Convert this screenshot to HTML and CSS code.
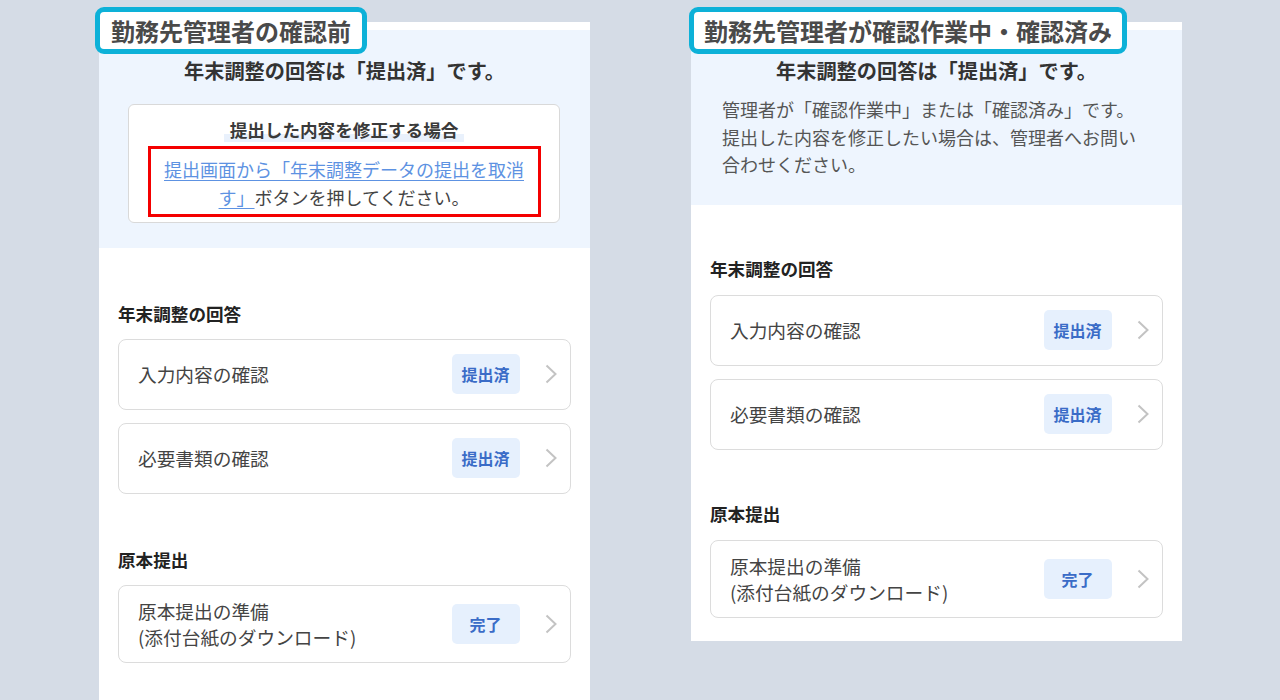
FILE: index.html
```html
<!DOCTYPE html>
<html lang="ja">
<head>
<meta charset="utf-8">
<title>年末調整の回答</title>
<link rel="stylesheet" href="styles.css">
</head>
<body>
<div class="stage">
  <section class="panel panel--left">
    <div class="label label--left">勤務先管理者の確認前</div>
    <div class="summary summary--left">
      <h1 class="summary-title">年末調整の回答は「提出済」です。</h1>
      <div class="notice">
        <div class="notice-title"><span class="hl">提出した内容を修正する場合</span></div>
        <div class="redbox"><a class="link" href="#">提出画面から「年末調整データの提出を取消す」</a>ボタンを押してください。</div>
      </div>
    </div>
    <div class="content content--left">
      <h2 class="sec-title">年末調整の回答</h2>
      <div class="cards">
        <div class="card"><div class="card-text">入力内容の確認</div><span class="badge">提出済</span><svg class="chev" width="14" height="20" viewBox="0 0 14 20"><path d="M2.5 1.5 L11.5 10 L2.5 18.5" fill="none" stroke="#c3c3c3" stroke-width="2"/></svg></div>
        <div class="card"><div class="card-text">必要書類の確認</div><span class="badge">提出済</span><svg class="chev" width="14" height="20" viewBox="0 0 14 20"><path d="M2.5 1.5 L11.5 10 L2.5 18.5" fill="none" stroke="#c3c3c3" stroke-width="2"/></svg></div>
      </div>
      <h2 class="sec-title">原本提出</h2>
      <div class="cards">
        <div class="card"><div class="card-text">原本提出の準備<br>(添付台紙のダウンロード)</div><span class="badge">完了</span><svg class="chev" width="14" height="20" viewBox="0 0 14 20"><path d="M2.5 1.5 L11.5 10 L2.5 18.5" fill="none" stroke="#c3c3c3" stroke-width="2"/></svg></div>
      </div>
    </div>
  </section>

  <section class="panel panel--right">
    <div class="label label--right">勤務先管理者が確認作業中・確認済み</div>
    <div class="summary summary--right">
      <h1 class="summary-title">年末調整の回答は「提出済」です。</h1>
      <p class="summary-text">管理者が「確認作業中」または「確認済み」です。<br>提出した内容を修正したい場合は、管理者へお問い<br>合わせください。</p>
    </div>
    <div class="content">
      <h2 class="sec-title">年末調整の回答</h2>
      <div class="cards">
        <div class="card"><div class="card-text">入力内容の確認</div><span class="badge">提出済</span><svg class="chev" width="14" height="20" viewBox="0 0 14 20"><path d="M2.5 1.5 L11.5 10 L2.5 18.5" fill="none" stroke="#c3c3c3" stroke-width="2"/></svg></div>
        <div class="card"><div class="card-text">必要書類の確認</div><span class="badge">提出済</span><svg class="chev" width="14" height="20" viewBox="0 0 14 20"><path d="M2.5 1.5 L11.5 10 L2.5 18.5" fill="none" stroke="#c3c3c3" stroke-width="2"/></svg></div>
      </div>
      <h2 class="sec-title">原本提出</h2>
      <div class="cards">
        <div class="card"><div class="card-text">原本提出の準備<br>(添付台紙のダウンロード)</div><span class="badge">完了</span><svg class="chev" width="14" height="20" viewBox="0 0 14 20"><path d="M2.5 1.5 L11.5 10 L2.5 18.5" fill="none" stroke="#c3c3c3" stroke-width="2"/></svg></div>
      </div>
    </div>
  </section>
</div>
</body>
</html>
```

FILE: styles.css
```css
* { box-sizing: border-box; }
html, body {
  margin: 0;
  padding: 0;
}
body {
  width: 1280px;
  height: 700px;
  overflow: hidden;
  background: #d5dce6;
  font-family: "Noto Sans CJK JP", "Noto Sans", sans-serif;
  color: #444;
}
.stage {
  display: flex;
  align-items: flex-start;
  gap: 101px;
  padding: 22px 0 0 99px;
}
.panel {
  position: relative;
  width: 491px;
  background: #fff;
  padding-top: 8px;
}
.panel--left {
  min-height: 700px;
}
.panel--right {
  padding-bottom: 23px;
}
.label {
  position: absolute;
  top: -15px;
  background: #fff;
  border: 5px solid #0db1d8;
  border-radius: 9px;
  padding: 0 11px;
  height: 47px;
  line-height: 37px;
  font-size: 24px;
  font-weight: 700;
  color: #4a4a4a;
  white-space: nowrap;
}
.label--left { left: -4px; }
.label--right { left: -2px; padding: 0 10px; }

.summary {
  background: #eef5fe;
  padding: 27px 20px 25px;
}
.summary--right {
  padding-bottom: 26px;
}
.summary-title {
  margin: 0;
  font-size: 20.2px;
  line-height: 28px;
  font-weight: 700;
  color: #333;
  text-align: center;
}
.summary-text {
  margin: 11px 0 0 11px;
  font-size: 18px;
  line-height: 27.5px;
  color: #555;
}
.notice {
  margin: 19px 10px 0 9px;
  background: #fff;
  border: 1.5px solid #d9d9d9;
  border-radius: 6px;
  padding: 12px 18.5px 5px;
  text-align: center;
}
.notice-title {
  font-size: 17.6px;
  line-height: 26px;
  font-weight: 700;
  color: #3a3a3a;
}
.hl {
  padding: 0 6px;
  background: linear-gradient(transparent 68%, #e9f1fc 68%);
}
.redbox {
  margin-top: 2.5px;
  border: 3px solid #f40000;
  padding: 6px 5px 3px;
  font-size: 18px;
  line-height: 28px;
  color: #444;
}
.link {
  color: #5d92e2;
  text-decoration: underline;
  text-underline-offset: 3px;
}

.content {
  padding: 0 19px;
}
.sec-title {
  margin: 51px 0 13px;
  font-size: 17.6px;
  line-height: 26px;
  font-weight: 700;
  color: #222;
}
.content--left .sec-title {
  margin: 53px 0 12px;
}
.cards {
  display: flex;
  flex-direction: column;
  gap: 13px;
}
.card {
  display: flex;
  align-items: center;
  min-height: 71px;
  border: 1.5px solid #dcdcdc;
  border-radius: 8px;
  padding: 12px 12.5px 12px 19px;
  background: #fff;
}
.card-text {
  flex: 1;
  font-size: 18.7px;
  line-height: 26px;
  color: #444;
}
.badge {
  width: 68px;
  height: 40px;
  display: flex;
  align-items: center;
  justify-content: center;
  background: #e6f0fd;
  border-radius: 5px;
  color: #3a6cc7;
  font-size: 16px;
  font-weight: 700;
}
.chev {
  display: block;
  margin-left: 24px;
}
```
